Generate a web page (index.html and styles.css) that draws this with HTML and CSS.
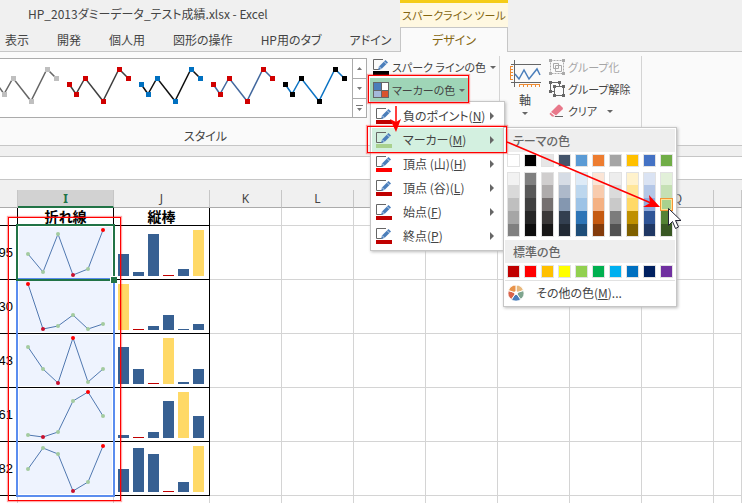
FILE: index.html
```html
<!DOCTYPE html>
<html lang="ja">
    <head>
        <meta charset="utf-8">
        <title>HP_2013ダミーデータ_テスト成績.xlsx - Excel</title>
        <link rel="stylesheet" href="styles.css">
        <script src="script.js" defer></script>
    </head>
    <body>
        <svg class="defs">
            <symbol id="pen" viewBox="0 0 16 11">
                <path d="M10 .5H.5v10h6" fill="none" stroke="#666"/>
                <path d="M5 11l1-3.5L12.500 1l2.500 2.500L8.500 10z" fill="#4a7ebb"/>
                <path d="M11 2.500l2.500 2.500M6 7.500L8.500 10" stroke="#fff" stroke-width=".7"/>
            </symbol>
        </svg>

        <header class="top">
            <div class="top-left">
                <div class="title">HP_2013ダミーデータ_テスト成績.xlsx - Excel</div>
                <nav class="tabs">
                    <a href="#">表示</a>
                    <a href="#">開発</a>
                    <a href="#">個人用</a>
                    <a href="#">図形の操作</a>
                    <a href="#">HP用のタブ</a>
                    <a href="#">アドイン</a>
                </nav>
            </div>
            <div class="context">
                <div class="context-title">スパークライン ツール</div>
                <a class="context-tab" href="#">デザイン</a>
            </div>
            <div class="top-rest"></div>
        </header>

        <section class="ribbon">
            <div class="group styles">
                <div class="gallery">
                    <div class="tiles" id="tiles"></div>
                    <div class="scroll">
                        <button aria-label="上へ"><svg width="5" height="3"><path d="M0 3L2.500 0L5 3z" fill="#777"/></svg></button>
                        <button aria-label="下へ"><svg width="5" height="3"><path d="M0 0h5L2.500 3z" fill="#777"/></svg></button>
                        <button aria-label="その他"><svg width="7" height="6"><path d="M0 0h7v1H0zM1 3h5L3.500 6z" fill="#777"/></svg></button>
                    </div>
                </div>
                <div class="group-name">スタイル</div>
            </div>

            <div class="group colors">
                <button class="cmd">
                    <svg class="icon" viewBox="0 0 16 16"><use href="#pen" width="16" height="11"/><path d="M0 12h16v4H0z"/></svg>
                    スパーク ラインの色<span class="caret"></span>
                </button>
                <div class="dropdown">
                    <button class="cmd open">
                        <svg class="icon" viewBox="0 0 16 16">
                            <path d="M0 0h16v16H0z" fill="#666"/>
                            <path d="M1 1h7v7H1z" fill="#4a7ebb"/>
                            <path d="M9 1h6v7H9z" fill="#fff"/>
                            <path d="M1 9h7v6H1z" fill="#a5b9da"/>
                            <path d="M9 9h6v6H9z" fill="#d9532c"/>
                        </svg>
                        マーカーの色<span class="caret"></span>
                    </button>
                    <div class="menu">
                        <button class="item"><svg class="icon dark-red" viewBox="0 0 16 16"><use href="#pen" width="16" height="11"/><path d="M0 12h16v4H0z"/></svg><span>負のポイント(<u>N</u>)</span><i class="more"></i></button>
                        <button class="item active"><svg class="icon green" viewBox="0 0 16 16"><use href="#pen" width="16" height="11"/><path d="M0 12h16v4H0z"/></svg><span>マーカー(<u>M</u>)</span><i class="more"></i></button>
                        <button class="item"><svg class="icon red" viewBox="0 0 16 16"><use href="#pen" width="16" height="11"/><path d="M0 12h16v4H0z"/></svg><span>頂点 (山)(<u>H</u>)</span><i class="more"></i></button>
                        <button class="item"><svg class="icon dark-red" viewBox="0 0 16 16"><use href="#pen" width="16" height="11"/><path d="M0 12h16v4H0z"/></svg><span>頂点 (谷)(<u>L</u>)</span><i class="more"></i></button>
                        <button class="item"><svg class="icon dark-red" viewBox="0 0 16 16"><use href="#pen" width="16" height="11"/><path d="M0 12h16v4H0z"/></svg><span>始点(<u>F</u>)</span><i class="more"></i></button>
                        <button class="item"><svg class="icon dark-red" viewBox="0 0 16 16"><use href="#pen" width="16" height="11"/><path d="M0 12h16v4H0z"/></svg><span>終点(<u>P</u>)</span><i class="more"></i></button>
                    </div>
                    <div class="palette">
                        <h3>テーマの色</h3>
                        <div class="swatches" id="theme"></div>
                        <div class="shades" id="shades"></div>
                        <h3>標準の色</h3>
                        <div class="swatches" id="standard"></div>
                        <button class="more-colors">
                            <svg class="icon" viewBox="0 0 16 16">
                                <g stroke="#fff" stroke-width="1">
                                    <path d="M8 8V0A8 8 0 0 1 15.600 5.500z" fill="#e8b87c"/>
                                    <path d="M8 8L15.600 5.500A8 8 0 0 1 12.700 14.500z" fill="#7fa58f"/>
                                    <path d="M8 8L12.700 14.500A8 8 0 0 1 3.300 14.500z" fill="#4a7ebb"/>
                                    <path d="M8 8L3.300 14.500A8 8 0 0 1 .4 5.500z" fill="#d9634a"/>
                                    <path d="M8 8L.4 5.500A8 8 0 0 1 8 0z" fill="#e8934a"/>
                                </g>
                                <circle cx="8" cy="8" r="2" fill="#fff"/>
                            </svg>
                            <span>その他の色(<u>M</u>)...</span>
                        </button>
                    </div>
                </div>
            </div>

            <div class="group axis-group">
                <button class="axis">
                    <svg width="31" height="28" viewBox="0 0 31 28" fill="none">
                        <path d="M4.500 0v27M1 4.500h30M1 22.500h30" stroke="#666"/>
                        <path d="M.5 6v14M0 6.500h3M0 9.500h3M0 12.500h3M0 15.500h3M0 19.500h3M9 24.500h21M9.500 24v3M13.500 24v3M17.500 24v3M21.500 24v3M25.500 24v3M29.500 24v3" stroke="#ed8b33"/>
                        <path d="M5 14l4 5 5-9 5 9 8-10 3 6" stroke="#4a7ebb" stroke-width="1.500"/>
                    </svg>
                    軸
                    <span class="caret"></span>
                </button>
                <div class="stack">
                    <button class="cmd" disabled>
                        <svg class="icon" viewBox="0 0 16 16" fill="none">
                            <path d="M1.500 1.500h13v13h-13z" stroke="#aaa" stroke-dasharray="2 1"/>
                            <path d="M0 0h3v3H0zM13 0h3v3h-3zM0 13h3v3H0zM13 13h3v3h-3z" fill="#aaa"/>
                            <path d="M4.500 4.500h5v5h-5zM6.500 6.500h6v6h-6z" stroke="#aaa"/>
                        </svg>
                        グループ化
                    </button>
                    <button class="cmd">
                        <svg class="icon" viewBox="0 0 16 16" fill="none">
                            <path d="M5.500 10.500h-4v-9h9v4M5.500 5.500h9v9h-9z" stroke="#666"/>
                            <path d="M0 0h3v3H0zM9 0h3v3H9zM0 9h3v3H0zM4 4h3v3H4zM13 4h3v3h-3zM4 13h3v3H4zM13 13h3v3h-3z" fill="#666"/>
                        </svg>
                        グループ解除
                    </button>
                    <button class="cmd clear">
                        <svg class="icon" viewBox="0 0 16 16">
                            <path d="M2 9l7-7q1-1 2 0l2.500 2.500q1 1 0 2L7 12.500z" fill="#e8788a"/>
                            <path d="M1.500 9.500L6 13.500H3L.5 11z" fill="#e8788a"/>
                            <path d="M6 13.500h8" stroke="#666"/>
                        </svg>
                        クリア<span class="caret"></span>
                    </button>
                </div>
            </div>
        </section>

        <div class="formula"></div>

        <main class="sheet">
            <table>
                <colgroup>
                    <col class="col-h"><col class="col-chart"><col class="col-chart">
                    <col class="col"><col class="col"><col class="col"><col class="col"><col class="col"><col class="col"><col class="col"><col>
                </colgroup>
                <thead>
                    <tr>
                        <th></th><th class="selected">I</th><th>J</th><th>K</th><th>L</th><th></th><th></th><th></th><th></th><th>Q</th><th></th>
                    </tr>
                </thead>
                <tbody id="rows">
                    <tr class="names">
                        <td class="boxed"></td><td class="boxed">折れ線</td><td class="boxed">縦棒</td><td></td><td></td><td></td><td></td><td></td><td></td><td></td><td></td>
                    </tr>
                </tbody>
            </table>
            <div class="range"></div>
            <div class="active-cell"></div>
        </main>

        <div class="mark mark-button"></div>
        <div class="mark mark-item"></div>
        <div class="mark mark-range"></div>
        <svg class="arrows" width="742" height="503">
            <g fill="#f00" stroke="#f00">
                <path d="M396 106v16M507 142l144 61" stroke-width="1.500"/>
                <path d="M396 132l-6-13 6 3 5-3zM660 207l-11-12 1 8-7 4z" stroke="none"/>
            </g>
            <path d="M668.500 208.500v17l4-4 3 7 3-1.500-3-6.500h5.500z" fill="#fff" stroke="#223"/>
        </svg>
    </body>
</html>
```
FILE: styles.css
```css
* {
    box-sizing: border-box;
}

body {
    margin: 0;
    height: 100vh;
    display: flex;
    flex-direction: column;
    position: relative;
    overflow: hidden;
    background: #f0f0f0;
    color: #444;
    font: 12px/16px "Noto Sans CJK JP", sans-serif;
    font-feature-settings: "palt";
}

a {
    color: inherit;
    text-decoration: none;
}

button {
    margin: 0;
    padding: 0;
    border: 0;
    background: none;
    color: inherit;
    font: inherit;
    font-feature-settings: inherit;
    text-align: left;
    white-space: nowrap;
}

.defs {
    position: absolute;
    width: 0;
    height: 0;
}

/* title bar and tabs */

.top {
    display: flex;
    flex: none;
    height: 52px;
    white-space: nowrap;
}

.top-left {
    width: 400px;
    border-bottom: 1px solid #c6c6c6;
}

.title {
    height: 28px;
    padding-left: 28px;
    line-height: 28px;
}

.tabs {
    display: flex;
    gap: 28px;
    padding-left: 5px;
    line-height: 23px;
}

.context {
    width: 108px;
    display: flex;
    flex-direction: column;
    color: #846611;
    text-align: center;
}

.context-title {
    height: 27px;
    border-top: 3px solid #f5cc18;
    background: #fff8e1;
    font-size: 11px;
    line-height: 24px;
}

.context-tab {
    flex: 1;
    border: 1px solid #c6c6c6;
    border-bottom: 0;
    background: #fafafa;
    line-height: 23px;
}

.top-rest {
    flex: 1;
    border-bottom: 1px solid #c6c6c6;
}

/* ribbon */

.ribbon {
    display: flex;
    flex: none;
    height: 94px;
    background: #fafafa;
    border-bottom: 1px solid #c6c6c6;
}

.group {
    margin: 4px 0;
}

.styles {
    width: 370px;
    padding-right: 3px;
}

.gallery {
    display: flex;
    height: 60px;
    margin-top: 2px;
    border: 1px solid #ababab;
    border-left: 0;
    background: #fff;
}

.tiles {
    flex: 1;
    display: flex;
    justify-content: flex-end;
    overflow: hidden;
    padding-right: 1px;
}

.tiles svg {
    flex: none;
}

.scroll {
    width: 14px;
    display: grid;
    grid-template-rows: 1fr 1fr 1fr;
    border-left: 1px solid #ababab;
}

.scroll button {
    display: flex;
    align-items: center;
    justify-content: center;
}

.scroll button + button {
    border-top: 1px solid #ababab;
}

.group-name {
    padding: 10px 0 0 44px;
    text-align: center;
}

.colors {
    width: 130px;
    border-right: 1px solid #d4d4d4;
}

.cmd {
    display: flex;
    align-items: center;
    height: 22px;
    padding-left: 3px;
    font-size: 11px;
}

.cmd:disabled {
    color: #a6a6a6;
}

.icon {
    flex: none;
    width: 16px;
    height: 16px;
    margin-right: 3px;
}

.dark-red {
    fill: #c00000;
}

.red {
    fill: #f00;
}

.green {
    fill: #a9d18e;
}

.caret {
    margin-left: 4px;
    border: 3px solid transparent;
    border-top-color: #666;
    border-bottom: 0;
}

.dropdown {
    position: relative;
}

.open {
    width: 98px;
    height: 24px;
    background: #9fd5b7;
}

.menu,
.palette {
    position: absolute;
    z-index: 1;
    border: 1px solid #c6c6c6;
    background: #fff;
    box-shadow: 1px 1px 3px #bbb;
}

.menu {
    top: 23px;
    left: 0;
    width: 135px;
    padding: 2px 1px;
}

.item {
    display: flex;
    align-items: center;
    width: 100%;
    height: 24px;
    padding: 0 9px 0 4px;
}

.item .icon {
    margin-right: 11px;
}

.item.active {
    background: #d3f0e0;
}

.more {
    margin-left: auto;
    border: 4px solid transparent;
    border-left-color: #666;
    border-right: 0;
}

.palette {
    top: 49px;
    left: 133px;
    width: 174px;
    padding: 1px;
}

.palette h3 {
    height: 23px;
    margin: 0;
    padding-left: 8px;
    background: #eee;
    color: #666;
    font-size: 12px;
    font-weight: 500;
    line-height: 23px;
}

.swatches,
.shades {
    display: grid;
    grid-template-columns: repeat(10, 13px);
    gap: 4px;
    padding: 2px;
}

.shades {
    padding: 3px 2px 3px;
}

.swatches i {
    height: 13px;
    border: 1px solid #e2e2e2;
}

.shades i {
    display: block;
    height: 13px;
    border: solid #e2e2e2;
    border-width: 0 1px;
}

.shades i:first-child {
    border-top-width: 1px;
}

.shades i:last-child {
    border-bottom-width: 1px;
}

.shades .picked {
    border: 1px solid #f29536;
    box-shadow: inset 0 0 0 1px #ffe294;
}

.more-colors {
    display: flex;
    align-items: center;
    width: 100%;
    height: 25px;
    padding-left: 3px;
    border-top: 1px solid #e2e2e2;
}

.more-colors .icon {
    margin-right: 12px;
}

.axis-group {
    display: flex;
    width: 142px;
    border-right: 1px solid #d4d4d4;
}

.axis {
    display: flex;
    flex-direction: column;
    align-items: center;
    width: 46px;
    padding: 4px 0 0 4px;
    line-height: 24px;
}

.axis .caret {
    margin: 0;
}

.clear .caret {
    margin-left: 10px;
}

/* formula bar and sheet */

.formula {
    flex: none;
    height: 24px;
    margin: 10px 0;
    border: solid #c6c6c6;
    border-width: 1px 0;
    background: #fff;
}

.sheet {
    flex: 1;
    min-height: 0;
    position: relative;
    overflow: hidden;
    background: #fff;
}

table {
    width: 100%;
    table-layout: fixed;
    border-collapse: separate;
    border-spacing: 0;
}

.col-h {
    width: 18px;
}

.col-chart {
    width: 96px;
}

.col {
    width: 72px;
}

th {
    height: 18px;
    padding: 0;
    border: solid #c6c6c6;
    border-width: 0 1px 1px 0;
    border-bottom-color: #ababab;
    background: #f0f0f0;
    font: 12px/15px "Noto Sans", sans-serif;
}

th.selected {
    border-bottom: 2px solid #217346;
    background: #d2d2d2;
    color: #217346;
    font-weight: bold;
}

td {
    height: 54px;
    padding: 0;
    border: solid #d4d4d4;
    border-width: 0 1px 1px 0;
}

.boxed {
    border-color: #000;
    color: #000;
}

.names td {
    height: 18px;
    font-size: 14px;
    font-weight: bold;
    line-height: 17px;
    text-align: center;
}

.score div {
    display: flex;
    justify-content: flex-end;
    overflow: hidden;
    padding-right: 4px;
    font: 13px/16px "Liberation Sans", sans-serif;
}

.line {
    background: #eef3fe;
    box-shadow: inset 0 0 0 1px #fff;
}

td svg {
    display: block;
}

.cut td {
    height: 7px;
    border-bottom: 0;
}

.range,
.active-cell {
    position: absolute;
    left: 16px;
    width: 99px;
    border: 2px solid #5b8def;
}

.range {
    top: 88px;
    height: 219px;
}

.active-cell {
    top: 34px;
    height: 57px;
    border-color: #217346;
}

.active-cell::after {
    content: "";
    position: absolute;
    right: -4px;
    bottom: -4px;
    width: 6px;
    height: 6px;
    border: solid #fff;
    border-width: 1px 0 0 1px;
    background: #217346;
}

/* callouts */

.mark {
    position: absolute;
    z-index: 2;
    border: 1px solid #f00;
    box-shadow: 0 0 1px 1px #ff000055;
}

.mark-button {
    left: 368px;
    top: 75px;
    width: 101px;
    height: 28px;
}

.mark-item {
    left: 367px;
    top: 126px;
    width: 140px;
    height: 27px;
}

.mark-range {
    left: 8px;
    top: 217px;
    width: 113px;
    height: 284px;
}

.arrows {
    position: absolute;
    z-index: 3;
    left: 0;
    top: 0;
}
```
FILE: script.js
```js
// line and marker colors of the style gallery
let styles = [
    ['#666', '#bfbfbf'],
    ['#404040', '#d00000'],
    ['#111', '#0070c0'],
    ['#44699e', '#d00000'],
    ['#0d74c4', '#000'],
];
let tile = [[6, 25], [13, 35], [22, 19], [40, 42], [56, 10], [65, 19]];

// score, line heights (from the top), bar heights
let rows = [
    [95, [28, 46, 8, 49, 43, 4], [22, 4, 42, 1, 7, 46]],
    [30, [4, 49, 46, 35, 49, 44], [46, 1, 4, 15, 1, 6]],
    [43, [13, 35, 49, 4, 48, 35], [37, 15, 1, 46, 2, 15]],
    [61, [47, 49, 44, 13, 4, 28], [3, 1, 6, 37, 46, 22]],
    [82, [27, 6, 12, 49, 40, 4], [23, 44, 38, 1, 10, 46]],
];
let lows = [3, 1, 2, 1, 3];

let theme = ['#fff', '#000', '#e7e6e6', '#44546a', '#5b9bd5', '#ed7d31', '#a5a5a5', '#ffc000', '#4472c4', '#70ad47'];
let standard = ['#c00000', '#f00', '#ffc000', '#ff0', '#92d050', '#00b050', '#00b0f0', '#0070c0', '#002060', '#7030a0'];
let shades = [
    ['#f2f2f2', '#d9d9d9', '#bfbfbf', '#a6a6a6', '#808080'],
    ['#808080', '#595959', '#404040', '#262626', '#0d0d0d'],
    ['#d0cece', '#aeabab', '#757070', '#3b3838', '#181717'],
    ['#d6dce5', '#adb9ca', '#8497b0', '#333f50', '#222a35'],
    ['#deebf7', '#bdd7ee', '#9dc3e6', '#2e75b6', '#1f4e79'],
    ['#fbe5d6', '#f8cbad', '#f4b183', '#c55a11', '#843c0c'],
    ['#ededed', '#dbdbdb', '#c9c9c9', '#7c7c7c', '#525252'],
    ['#fff2cc', '#ffe699', '#ffd966', '#bf9000', '#7f6000'],
    ['#dae3f3', '#b4c7e7', '#8faadc', '#2f5597', '#203864'],
    ['#e2f0d9', '#c5e0b4', '#a9d18e', '#548235', '#385723'],
];

let swatch = (color, name) => `<i class="${name || ''}" style="background-color: ${color}"></i>`;

document.getElementById('theme').innerHTML = theme.map(c => swatch(c)).join('');
document.getElementById('standard').innerHTML = standard.map(c => swatch(c)).join('');
document.getElementById('shades').innerHTML = shades.map((column, x) =>
    '<div>' + column.map((c, y) => swatch(c, x == 9 && y == 2 ? 'picked' : '')).join('') + '</div>'
).join('');

document.getElementById('tiles').innerHTML = styles.map(([line, marker]) => {
    let squares = tile.map(([x, y]) => `<rect x="${x - 2}" y="${y - 2}" width="5" height="5" fill="${marker}"/>`);
    return `<svg width="72" height="58"><polyline points="${tile.join(' ')}" fill="none" stroke="${line}" stroke-width="1.5"/>${squares.join('')}</svg>`;
}).join('');

function lineChart(values, low) {
    let points = values.map((y, i) => [10 + i * 15, y]);
    let high = values.indexOf(Math.min(...values));
    let dots = points.map(([x, y], i) => {
        let color = i == high ? '#f00' : i == low ? '#c8102e' : '#a3cba0';
        return `<circle cx="${x}" cy="${y}" r="2" fill="${color}"/>`;
    });
    return `<svg width="95" height="53"><polyline points="${points.join(' ')}" fill="none" stroke="#5078b0"/>${dots.join('')}</svg>`;
}

function barChart(values, low) {
    let high = values.indexOf(Math.max(...values));
    let bars = values.map((h, i) => {
        let color = i == high ? '#ffd966' : i == low ? '#c00000' : '#376092';
        return `<rect x="${4 + i * 15}" y="${50 - h}" width="11" height="${h}" fill="${color}"/>`;
    });
    return `<svg width="95" height="53">${bars.join('')}</svg>`;
}

let tbody = document.getElementById('rows');
rows.forEach(([score, line, bars], i) => {
    let tr = document.createElement('tr');
    tr.innerHTML = `<td class="boxed score"><div>${score}</div></td>` +
        `<td class="boxed line">${lineChart(line, lows[i])}</td>` +
        `<td class="boxed">${barChart(bars, lows[i])}</td>` +
        '<td></td>'.repeat(8);
    tbody.appendChild(tr);
});

let last = document.createElement('tr');
last.className = 'cut';
last.innerHTML = '<td></td>'.repeat(11);
tbody.appendChild(last);
```
